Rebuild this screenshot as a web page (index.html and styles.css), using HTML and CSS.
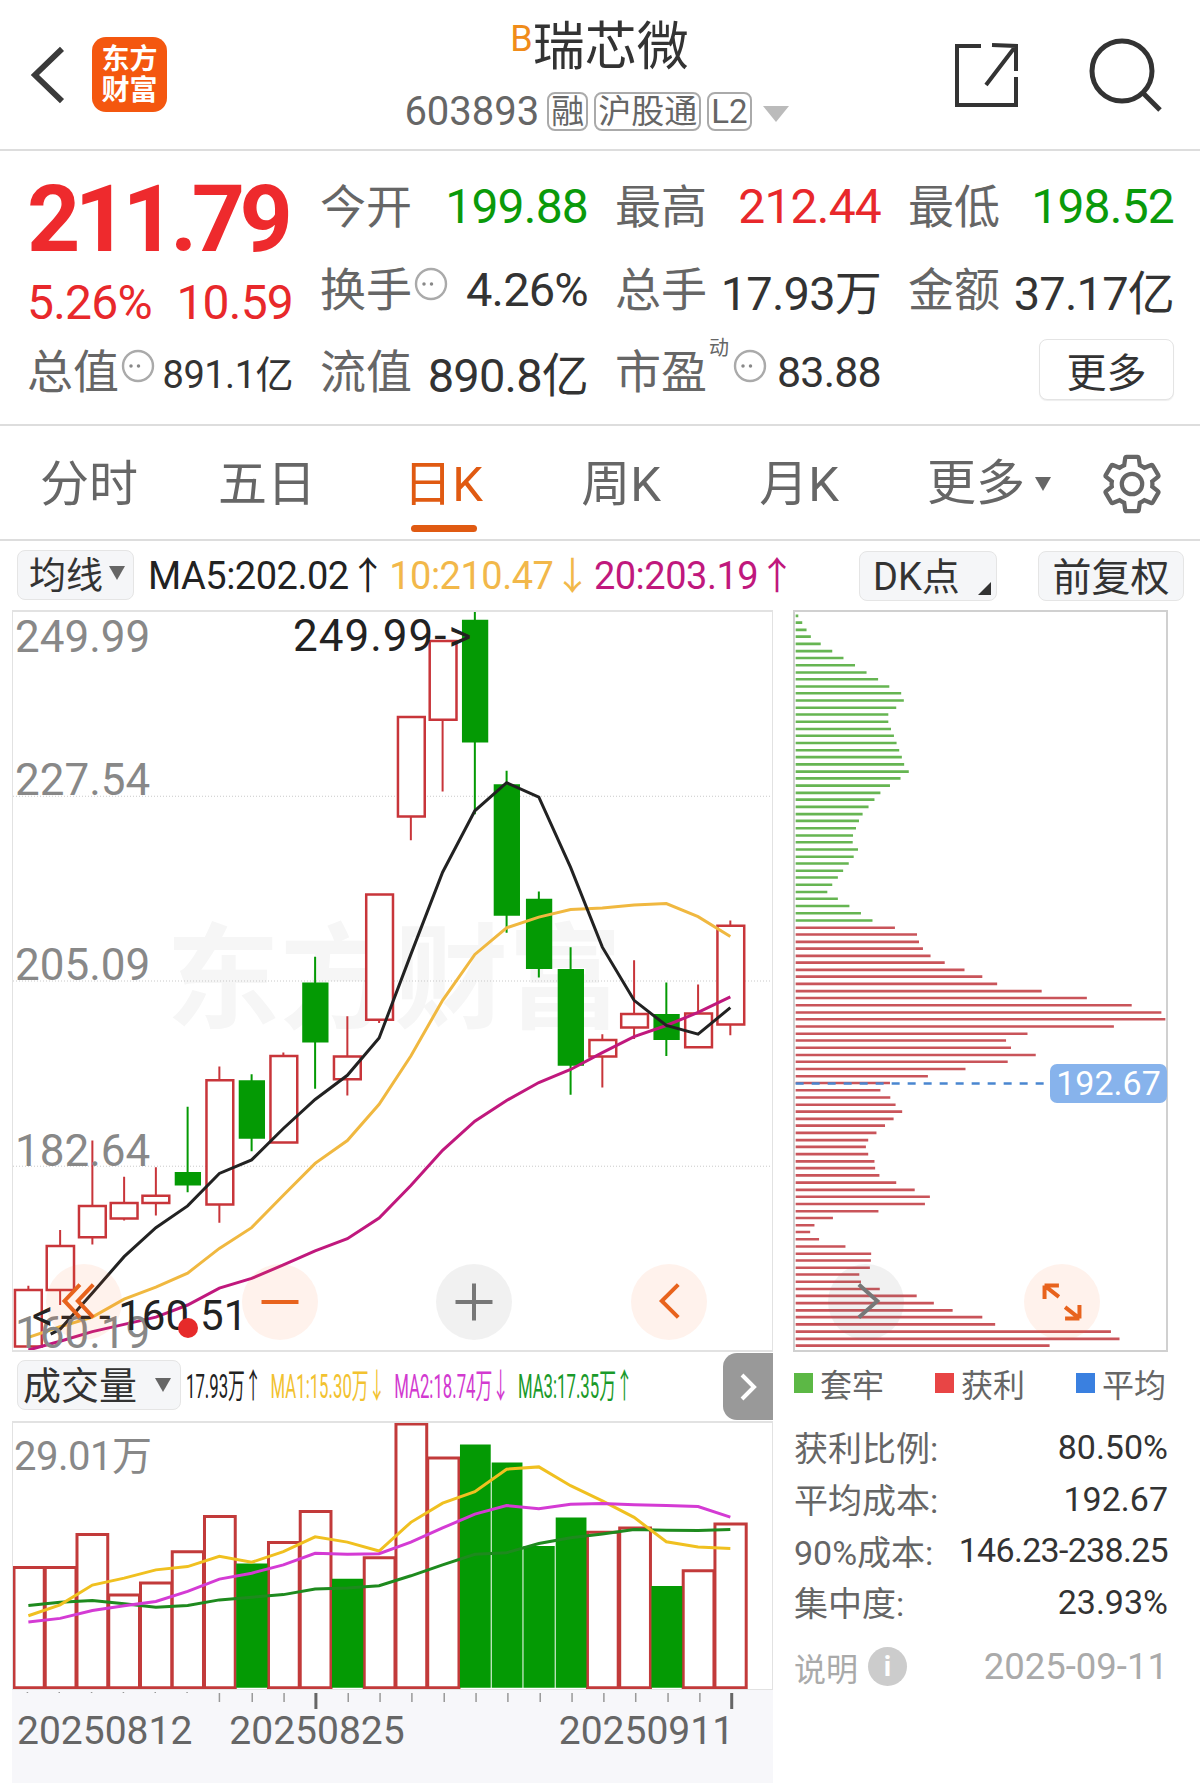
FILE: index.html
```html
<!DOCTYPE html>
<html lang="zh-CN">
<head>
<meta charset="utf-8">
<title>瑞芯微 603893</title>
<meta name="viewport" content="width=device-width, initial-scale=1">
<link rel="stylesheet" href="styles.css">
</head>
<body>
<header class="top">
	<div class="top-left">
		<svg class="back" viewBox="0 0 36 60"><path d="M33 3 5 30l28 27"/></svg>
		<div class="logo">东方<br>财富</div>
	</div>
	<div class="top-mid">
		<div class="name"><sup>B</sup>瑞芯微</div>
		<div class="code">603893<span class="tag first">融</span><span class="tag">沪股通</span><span class="tag">L2</span><i class="caret"></i></div>
	</div>
	<div class="top-right">
		<svg class="share" viewBox="0 0 63 64"><path d="M26 3H2v59h59V34M61 28V3L37 2M60 4 31 42"/></svg>
		<svg class="search" viewBox="0 0 75 74"><circle cx="34" cy="33" r="30"/><path d="m55 55 17 17"/></svg>
	</div>
</header>

<section class="quote">
	<div class="cell"><div class="price">211.79</div></div>
	<div class="cell"><span class="lb">今开</span><b class="up-g">199.88</b></div>
	<div class="cell"><span class="lb">最高</span><b class="up-r">212.44</b></div>
	<div class="cell"><span class="lb">最低</span><b class="up-g">198.52</b></div>

	<div class="cell change"><b class="up-r">5.26%</b><b class="up-r">10.59</b></div>
	<div class="cell"><span class="lb">换手<svg class="more-i" viewBox="0 0 34 34"><circle cx="17" cy="17" r="15"/><path d="M10 17H25"/></svg></span><b>4.26%</b></div>
	<div class="cell"><span class="lb">总手</span><b>17.93万</b></div>
	<div class="cell"><span class="lb">金额</span><b>37.17亿</b></div>

	<div class="cell"><span class="lb">总值<svg class="more-i" viewBox="0 0 34 34"><circle cx="17" cy="17" r="15"/><path d="M10 17H25"/></svg></span><b class="small">891.1亿</b></div>
	<div class="cell"><span class="lb">流值</span><b>890.8亿</b></div>
	<div class="cell"><span class="lb">市盈<small>动</small><svg class="more-i" viewBox="0 0 34 34"><circle cx="17" cy="17" r="15"/><path d="M10 17H25"/></svg></span><b class="pe">83.88</b></div>
	<div class="cell end"><button class="more-btn">更多</button></div>
</section>

<nav class="tabs">
	<a>分时</a>
	<a>五日</a>
	<a class="on">日K</a>
	<a>周K</a>
	<a>月K</a>
	<a class="more-tab">更多<i class="caret dark"></i></a>
	<svg class="gear" viewBox="0 0 24 24"><path d="M19.14 12.94c.04-.3.06-.61.06-.94 0-.32-.02-.64-.07-.94l2.03-1.58a.49.49 0 0 0 .12-.61l-1.92-3.32a.488.488 0 0 0-.59-.22l-2.39.96c-.5-.38-1.03-.7-1.62-.94l-.36-2.54a.484.484 0 0 0-.48-.41h-3.84c-.24 0-.43.17-.47.41l-.36 2.54c-.59.24-1.13.57-1.62.94l-2.39-.96c-.22-.08-.47 0-.59.22L2.74 8.87c-.12.21-.08.47.12.61l2.03 1.58c-.05.3-.09.63-.09.94s.02.64.07.94l-2.03 1.58a.49.49 0 0 0-.12.61l1.92 3.32c.12.22.37.29.59.22l2.39-.96c.5.38 1.03.7 1.62.94l.36 2.54c.05.24.24.41.48.41h3.84c.24 0 .44-.17.47-.41l.36-2.54c.59-.24 1.13-.56 1.62-.94l2.39.96c.22.08.47 0 .59-.22l1.92-3.32c.12-.22.07-.47-.12-.61l-2.01-1.58z"/><circle cx="12" cy="12" r="3.6"/></svg>
</nav>

<div class="ma-row">
	<div class="box ma-sel">均线<i class="caret dark"></i></div>
	<div class="ma-vals"><span class="c-black">MA5:202.02↑</span><span class="c-yellow">10:210.47↓</span><span class="c-pink">20:203.19↑</span></div>
	<div class="box dk">DK点<i class="corner"></i></div>
	<div class="box fq">前复权</div>
</div>

<main class="charts">
	<div class="left">
		<div class="kchart">
			<div class="watermark">东方财富</div>
			<svg class="fill" viewBox="24 22 1530 1526" preserveAspectRatio="none">
				<path class="grid" d="M24 403H1552M24 785H1552M24 1168H1552"/>
				<path class="wick red" d="M55 1415V1541M119 1300V1455M184 1115V1330M248 1190V1280M312 1170V1270M440 962V1285M569 933V1120M698 858V1022M762 606V872M826 239V494M890 82V393M1212 895V1005M1276 742V905M1405 792V923M1470 660V897"/>
				<path class="wick green" d="M376 1045V1222M505 978V1137M633 735V1008M955 20V440M1019 350V685M1084 600V778M1148 715V1020M1341 788V940"/>
				<path class="body-r" d="M28 1424H82V1541H28ZM92 1333H147V1424H92ZM157 1250H211V1315H157ZM221 1244H275V1276H221ZM285 1229H339V1244H285ZM414 990H468V1247H414ZM543 940H597V1119H543ZM671 941H725V988H671ZM736 606H790V865H736ZM800 239H854V445H800ZM864 82H918V245H864ZM1186 907H1240V941H1186ZM1250 853H1304V881H1250ZM1379 852H1433V922H1379ZM1444 671H1498V875H1444Z"/>
				<path class="body-g" d="M350 1180H403V1208H350ZM479 990H532V1111H479ZM607 788H660V912H607ZM929 38H982V292H929ZM993 378H1046V650H993ZM1058 615H1111V760H1058ZM1122 760H1175V960H1122ZM1315 853H1368V907H1315Z"/>
				<polyline class="line l-yellow" points="55,1522 119,1500 184,1480 248,1443 312,1418 376,1389 440,1338 505,1295 569,1228 633,1162 698,1115 762,1040 826,940 890,825 955,730 1019,675 1084,653 1148,637 1212,634 1276,628 1341,625 1405,652 1470,693"/>
				<polyline class="line l-pink" points="55,1548 119,1530 184,1510 248,1495 312,1480 376,1455 440,1420 505,1400 569,1372 633,1343 698,1318 762,1275 826,1208 890,1135 955,1075 1019,1032 1084,995 1148,968 1212,933 1276,900 1341,877 1405,850 1470,818"/>
				<polyline class="line l-black" points="100,1515 119,1505 184,1430 248,1355 312,1295 376,1250 440,1183 505,1155 569,1090 633,1030 698,980 762,903 826,730 890,560 955,433 1019,375 1084,405 1148,550 1212,715 1276,825 1341,877 1405,895 1470,840"/>
			</svg>
			<span class="axis-lb a1">249.99</span>
			<span class="axis-lb a2">227.54</span>
			<span class="axis-lb a3">205.09</span>
			<span class="axis-lb a4">182.64</span>
			<span class="axis-lb a5">160.19</span>
			<span class="peak hi">249.99<u>-&gt;</u></span>
			<span class="peak lo"><u>&lt;---</u>160.51</span>
			<i class="dot"></i>
			<div class="round warm p1"><svg viewBox="0 0 74 74"><path class="i-or" d="M33 20 18 36l15 16M46 20 31 36l15 16"/></svg></div>
			<div class="round warm p2"><svg viewBox="0 0 74 74"><path class="i-or" d="M19 37h36"/></svg></div>
			<div class="round cold p3"><svg viewBox="0 0 74 74"><path class="i-gr" d="M19 37h36M37 19v36"/></svg></div>
			<div class="round warm p4"><svg viewBox="0 0 74 74"><path class="i-or" d="M46 20 30 36l16 16"/></svg></div>
		</div>

		<div class="vol-bar">
			<div class="box vol-sel">成交量<i class="caret dark"></i></div>
			<div class="vol-ma"><span class="c-black">17.93万↑</span><span class="c-gold">MA1:15.30万↓</span><span class="c-violet">MA2:18.74万↓</span><span class="c-forest">MA3:17.35万↑</span></div>
			<div class="vol-tab"><svg viewBox="0 0 24 36"><path d="M6 6l12 12L6 30"/></svg></div>
		</div>

		<div class="vchart">
			<svg class="fill" viewBox="24 242 1530 806" preserveAspectRatio="none">
				<path class="vol-r" d="M26 1044V680H87V1044ZM89 1044V680H151V1044ZM153 1044V580H215V1044ZM217 1044V763H279V1044ZM281 1044V727H344V1044ZM345 1044V632H408V1044ZM410 1044V525H472V1044ZM539 1044V604H601V1044ZM603 1044V510H665V1044ZM732 1044V650H794V1044ZM796 1044V245H858V1044ZM860 1044V348H923V1044ZM1182 1044V573H1244V1044ZM1247 1044V560H1309V1044ZM1375 1044V690H1437V1044ZM1439 1044V548H1502V1044Z"/>
				<path class="vol-g" d="M474 1044V668H537V1044ZM667 1044V714H730V1044ZM925 1044V307H987V1044ZM989 1044V362H1051V1044ZM1053 1044V615H1116V1044ZM1118 1044V528H1180V1044ZM1311 1044V736H1373V1044Z"/>
				<polyline class="vline v-green" points="55,795 119,785 184,780 248,790 312,800 376,795 440,778 505,770 569,762 633,745 698,742 762,735 826,705 890,672 955,640 1019,635 1084,607 1148,590 1212,578 1276,565 1341,567 1405,568 1470,565"/>
				<polyline class="vline v-yellow" points="55,826 119,793 184,733 248,712 312,687 376,677 440,646 505,664 569,632 633,587 698,603 762,630 826,543 890,485 955,450 1019,382 1084,375 1148,432 1212,478 1276,528 1341,602 1405,618 1470,622"/>
				<polyline class="vline v-pink" points="55,845 119,834 184,810 248,796 312,783 376,752 440,715 505,697 569,672 633,637 698,640 762,638 826,603 890,560 955,518 1019,492 1084,502 1148,488 1212,486 1276,490 1341,492 1405,495 1470,527"/>
			</svg>
			<span class="vol-max">29.01万</span>
		</div>

		<div class="dates-wrap">
			<svg class="ticks" viewBox="24 0 1530 22" preserveAspectRatio="none">
				<path class="tick-s" d="M55 2V3M119 2V3M184 2V3M248 2V3M312 2V3M376 2V3"/>
				<path class="tick-m" d="M441 3V12M507 3V12M571 3V12M700 3V12M764 3V12M828 3V12M893 3V12M957 3V12M1021 3V12M1086 3V12M1150 3V12M1214 3V12M1278 3V12M1343 3V12M1407 3V12"/>
				<path class="tick-l" d="M635 3V19M1471 3V19"/>
			</svg>
			<div class="dates"><span>20250812</span><span>20250825</span><span>20250911</span></div>
		</div>
	</div>

	<aside class="right">
		<div class="profile">
			<svg class="fill" viewBox="40 22 1125 1526" preserveAspectRatio="none">
				<path class="pf pf-g" d="M42 30H50M42 44H62M42 59H75M42 73H88M42 88H118M42 103H153M42 117H187M42 132H222M42 147H257M42 161H292M42 176H326M42 190H362M42 205H370M42 220H347M42 234H323M42 249H323M42 264H331M42 278H340M42 293H348M42 308H356M42 322H364M42 337H371M42 352H385M42 366H360M42 381H328M42 396H299M42 410H281M42 425H263M42 440H245M42 454H234M42 469H225M42 484H216M42 498H215M42 513H231M42 528H218M42 542H203M42 557H186M42 571H170M42 586H153M42 601H138M42 615H170M42 630H205M42 645H240M42 660H275"/>
				<path class="pf pf-r" d="M42 675H343M42 689H410M42 704H416M42 718H428M42 733H451M42 747H494M42 762H554M42 776H608M42 791H653M42 806H788M42 820H925M42 835H1061M42 850H1151M42 864H1163M42 879H1007M42 894H745M42 908H680M42 923H695M42 938H770M42 952H685M42 967H557M42 982H443M42 996H328M42 1011H299M42 1026H329M42 1041H345M42 1055H365M42 1070H339M42 1084H313M42 1099H287M42 1114H262M42 1128H255M42 1143H262M42 1158H281M42 1172H283M42 1187H296M42 1202H347M42 1217H403M42 1231H449M42 1246H434M42 1261H293M42 1275H155M42 1290H99M42 1304H86M42 1319H113M42 1334H193M42 1349H271M42 1363H270M42 1378H267M42 1392H235M42 1407H240M42 1422H297M42 1436H409M42 1451H461M42 1466H518M42 1480H608M42 1495H647M42 1510H998M42 1525H1024M42 1539H812"/>
				<path class="avg" d="M42 997H815"/>
			</svg>
			<span class="avg-tag">192.67</span>
			<div class="round cold p1"><svg viewBox="0 0 74 74"><path class="i-gdark" d="M30 20l18 16-18 16"/></svg></div>
			<div class="round warm p2"><svg viewBox="0 0 74 74"><path class="i-or" d="M20 21h14M20 21v13M20 21l14 11M54 53H40M54 53V40M54 53 40 42"/></svg></div>
		</div>
		<div class="legend">
			<span><i class="sq s-g"></i>套牢</span>
			<span><i class="sq s-r"></i>获利</span>
			<span><i class="sq s-b"></i>平均</span>
		</div>
		<div class="stats">
			<div><span>获利比例:</span><b>80.50%</b></div>
			<div><span>平均成本:</span><b>192.67</b></div>
			<div><span>90%成本:</span><b class="range">146.23-238.25</b></div>
			<div><span>集中度:</span><b>23.93%</b></div>
		</div>
		<div class="note"><span>说明<i class="info">i</i></span><span>2025-09-11</span></div>
	</aside>
</main>
</body>
</html>
```

FILE: styles.css
```css
*{margin:0;padding:0;box-sizing:border-box;}
html,body{background:#fff;}
body{width:1200px;height:1783px;overflow:hidden;color:#333;font-family:"Roboto","Noto Sans CJK SC",sans-serif;}
i{font-style:normal;}
b{font-weight:400;}
u{text-decoration:none;}

/* top bar */
.top{height:151px;border-bottom:2px solid #ddd;display:grid;grid-template-columns:1fr auto 1fr;align-items:center;padding:0 37px 0 30px;}
.top-left{display:flex;align-items:center;gap:27px;}
.back{width:35px;height:58px;fill:none;stroke:#3a3a3a;stroke-width:6;}
.logo{width:75px;height:75px;border-radius:14px;background:#f4570f;color:#fff;font-weight:700;font-size:28px;line-height:31px;text-align:center;padding-top:7px;}
.top-mid{display:flex;flex-direction:column;align-items:center;}
.name{font-size:52px;line-height:60px;color:#333;padding-left:6px;}
.name sup{font-size:36px;color:#f08c1a;line-height:1;vertical-align:14px;}
.code{display:flex;align-items:center;font-size:40px;line-height:40px;color:#666;margin-top:14px;}
.tag{border:2px solid #aaa;border-radius:8px;font-size:33px;line-height:36px;height:39px;padding:0 2px;margin-left:6px;color:#666;}
.tag.first{margin-left:8px;}
.caret{display:inline-block;width:0;height:0;border-left:13px solid transparent;border-right:13px solid transparent;border-top:16px solid #bbb;margin-left:11px;margin-top:4px;}
.caret.dark{border-left-width:8px;border-right-width:8px;border-top:14px solid #666;margin-left:6px;margin-top:0;}
.top-right{display:flex;justify-content:flex-end;align-items:center;gap:70px;}
.share{width:63px;height:64px;fill:none;stroke:#333;stroke-width:4;}
.search{width:75px;height:74px;fill:none;stroke:#333;stroke-width:5;}

/* quote block */
.quote{height:275px;border-bottom:2px solid #ddd;padding:14px 28px 0 27px;display:grid;grid-template-columns:266px 268px 266px 266px;column-gap:27px;grid-template-rows:83px 82px 83px;}
.cell{display:flex;justify-content:space-between;align-items:center;font-size:47px;letter-spacing:-.8px;white-space:nowrap;}
.cell.end{justify-content:flex-end;}
.lb{font-size:46px;letter-spacing:0;color:#666;display:flex;align-items:center;margin-top:-7px;}
.lb small{font-size:20px;color:#666;align-self:flex-start;margin:3px 2px 0 2px;line-height:20px;}
.small{font-size:38px;letter-spacing:-.5px;}
.pe{font-size:43px;}
.up-g{color:#0a9a0a;font-size:48px;}
.up-r{color:#e8282b;font-size:48px;}
.price{font-size:93px;font-weight:700;letter-spacing:-5.6px;color:#ee2a2d;line-height:83px;margin:25px 0 0;}
.change{padding-top:26px;}
.more-i{width:34px;height:34px;fill:none;stroke:#aaa;stroke-width:2.4;margin:-4px 0 0 2px;flex:none;}
.more-i path{stroke:#888;stroke-width:3.5;stroke-linecap:round;stroke-dasharray:0 7.5;}
.more-btn{width:135px;height:61px;border:1px solid #e4e4e4;border-radius:8px;background:#fff;font:40px "Noto Sans CJK SC",sans-serif;color:#333;box-shadow:0 1px 1px #eee;margin-top:-4px;}

/* period tabs */
.tabs{height:115px;border-bottom:2px solid #ddd;display:grid;grid-template-columns:repeat(6,178px) 1fr;align-items:center;}
.tabs a{height:115px;line-height:118px;text-align:center;font-size:49px;color:#666;position:relative;}
.tabs a:nth-child(n+3):nth-child(-n+5){padding-right:4px;}
.tabs a.on{color:#e05a12;}
.tabs a.on::after{content:"";position:absolute;left:55px;top:99px;width:66px;height:7px;border-radius:4px;background:#e05a12;}
.more-tab{display:flex;justify-content:center;align-items:center;padding-left:20px;}
.more-tab .caret{margin-left:10px;}
.gear{width:68px;height:68px;margin:0 0 0 30px;fill:none;stroke:#666;stroke-width:1.5;}

/* MA row */
.ma-row{height:69px;display:flex;align-items:center;padding:0 16px 0 17px;}
.box{background:#f5f6f8;border:1px solid #e5e5e5;border-radius:8px;color:#333;display:flex;align-items:center;white-space:nowrap;}
.ma-sel{width:117px;height:50px;font-size:37px;padding:0 0 4px 11px;margin-top:-2px;}
.ma-vals{flex:1;display:flex;font-size:38px;letter-spacing:-.5px;margin:-6px 0 0 14px;gap:3px;white-space:nowrap;}
.c-black{color:#222;}
.c-yellow{color:#f2b84a;}
.c-pink{color:#c0187d;}
.c-gold{color:#f2c230;}
.c-violet{color:#d23ad0;}
.c-forest{color:#1a9a2a;}
.dk{width:138px;height:50px;font-size:38px;padding:0 0 4px 13px;position:relative;}
.corner{position:absolute;right:5px;bottom:5px;width:0;height:0;border-left:13px solid transparent;border-bottom:13px solid #333;}
.fq{width:146px;height:50px;font-size:39px;padding-bottom:4px;justify-content:center;margin-left:41px;}

/* chart columns */
.charts{display:flex;gap:20px;padding-left:12px;}
.left{width:761px;}
.right{width:375px;}
.fill{width:100%;height:100%;display:block;}

.kchart{height:742px;position:relative;border:1px solid #e2e2e2;border-top-width:2px;border-bottom-width:2px;}
.kchart .fill{position:relative;}
.kchart svg *,.vchart svg *,.profile svg *,.ticks *{vector-effect:non-scaling-stroke;}
.watermark{position:absolute;left:153px;top:308px;font-size:114px;font-weight:700;line-height:120px;color:#f6f6f6;white-space:nowrap;}
.grid{stroke:#c9c9c9;stroke-width:1;stroke-dasharray:1 2;fill:none;}
.wick{fill:none;stroke-width:2;}
.wick.red{stroke:#c8353a;}
.wick.green{stroke:#049a04;}
.body-r{fill:#fff;stroke:#c8353a;stroke-width:2.5;}
.body-g{fill:#049a04;}
.line{fill:none;stroke-width:3;}
.l-black{stroke:#222;}
.l-yellow{stroke:#f0b840;}
.l-pink{stroke:#c0187d;}
.axis-lb,.peak{position:absolute;font-size:44px;line-height:44px;white-space:nowrap;}
.axis-lb{left:2px;color:#888;}
.a1{top:3px;}
.a2{top:146px;}
.a3{top:331px;}
.a4{top:517px;}
.a5{top:699px;}
.peak{color:#222;letter-spacing:1px;}
.hi{left:280px;top:2px;}
.hi u{letter-spacing:2px;}
.lo{left:19px;top:682px;font-size:42px;letter-spacing:0;}
.lo u{letter-spacing:7.5px;}
.dot{position:absolute;left:165px;top:706px;width:20px;height:20px;border-radius:50%;background:#e62a2a;}
.round{position:absolute;top:652px;width:76px;height:76px;border-radius:50%;}
.round svg{width:76px;height:76px;display:block;fill:none;stroke-width:4;}
.warm{background:rgba(255,110,40,.09);}
.cold{background:rgba(120,120,120,.1);}
.p1{left:33px;}
.p2{left:229px;}
.p3{left:423px;}
.p4{left:618px;}
.i-or{stroke:#e8631d;}
.i-gr{stroke:#777;}
.i-gdark{stroke:#777;}

/* volume */
.vol-bar{height:69px;position:relative;display:flex;align-items:center;padding-left:5px;}
.vol-sel{width:164px;height:50px;font-size:38px;padding:0 0 5px 5px;margin-top:-3px;}
.vol-sel .caret{margin:5px 0 0 18px;}
.vol-ma{width:442px;margin:-2px 0 0 5px;display:flex;gap:18px;font-size:34px;line-height:40px;white-space:nowrap;transform:scaleX(.493);transform-origin:0 50%;flex:none;}
.vol-tab{position:absolute;right:0;top:1px;width:50px;height:67px;background:#999;border-radius:14px 0 0 14px;display:flex;align-items:center;justify-content:center;}
.vol-tab svg{width:24px;height:36px;fill:none;stroke:#fff;stroke-width:4;}
.vchart{height:269px;position:relative;border:1px solid #e2e2e2;border-width:2px 1px 1px;}
.vol-r{fill:#fff;stroke:#c23a3a;stroke-width:3;}
.vol-g{fill:#049a04;}
.vline{fill:none;stroke-width:3;}
.v-green{stroke:#1e8a1e;}
.v-yellow{stroke:#f0c020;}
.v-pink{stroke:#d43bd4;}
.vol-max{position:absolute;left:1px;top:10px;font-size:40px;line-height:48px;color:#888;letter-spacing:-.5px;}
.dates-wrap{height:94px;background:#f7f7fa;}
.ticks{width:100%;height:22px;display:block;}
.tick-s,.tick-m{stroke:#999;stroke-width:1.5;fill:none;}
.tick-l{stroke:#666;stroke-width:3;fill:none;}
.dates{display:flex;font-size:39px;line-height:38px;color:#666;padding-left:5px;}
.dates span:nth-child(2){margin-left:37px;}
.dates span:nth-child(3){margin-left:154px;}

/* cost profile */
.profile{height:742px;position:relative;border:2px solid #d0d0d0;}
.pf{fill:none;stroke-width:2.6;}
.pf-g{stroke:#66b552;}
.pf-r{stroke:#c9545a;}
.avg{stroke:#4a86d0;stroke-width:2.5;stroke-dasharray:8 8;fill:none;}
.avg-tag{position:absolute;right:-1px;top:452px;width:117px;height:39px;background:#87b3ec;border-radius:7px;color:#fff;font-size:34px;line-height:39px;text-align:center;}
.legend{height:69px;padding:0 0 7px 1px;display:grid;grid-template-columns:repeat(3,141px);align-items:center;font-size:32px;color:#666;}
.legend span{display:flex;align-items:center;gap:7px;}
.sq{width:19px;height:20px;display:block;}
.s-g{background:#5cb845;}
.s-r{background:#e84545;}
.s-b{background:#3a80e0;}
.stats{padding-left:1px;}
.stats div{height:51.7px;display:flex;justify-content:space-between;align-items:center;font-size:34px;color:#666;white-space:nowrap;}
.stats b{font-size:34px;color:#333;}
.stats .range{letter-spacing:-.7px;}
.note{margin-top:19px;height:40px;padding-left:1px;display:flex;justify-content:space-between;align-items:center;font-size:32px;color:#aaa;}
.note span{display:flex;align-items:center;}
.note span:last-child{font-size:36.5px;}
.info{width:39px;height:39px;margin-left:10px;border-radius:50%;background:#ccc;color:#fff;font-weight:700;font-size:28px;line-height:39px;text-align:center;}
```
